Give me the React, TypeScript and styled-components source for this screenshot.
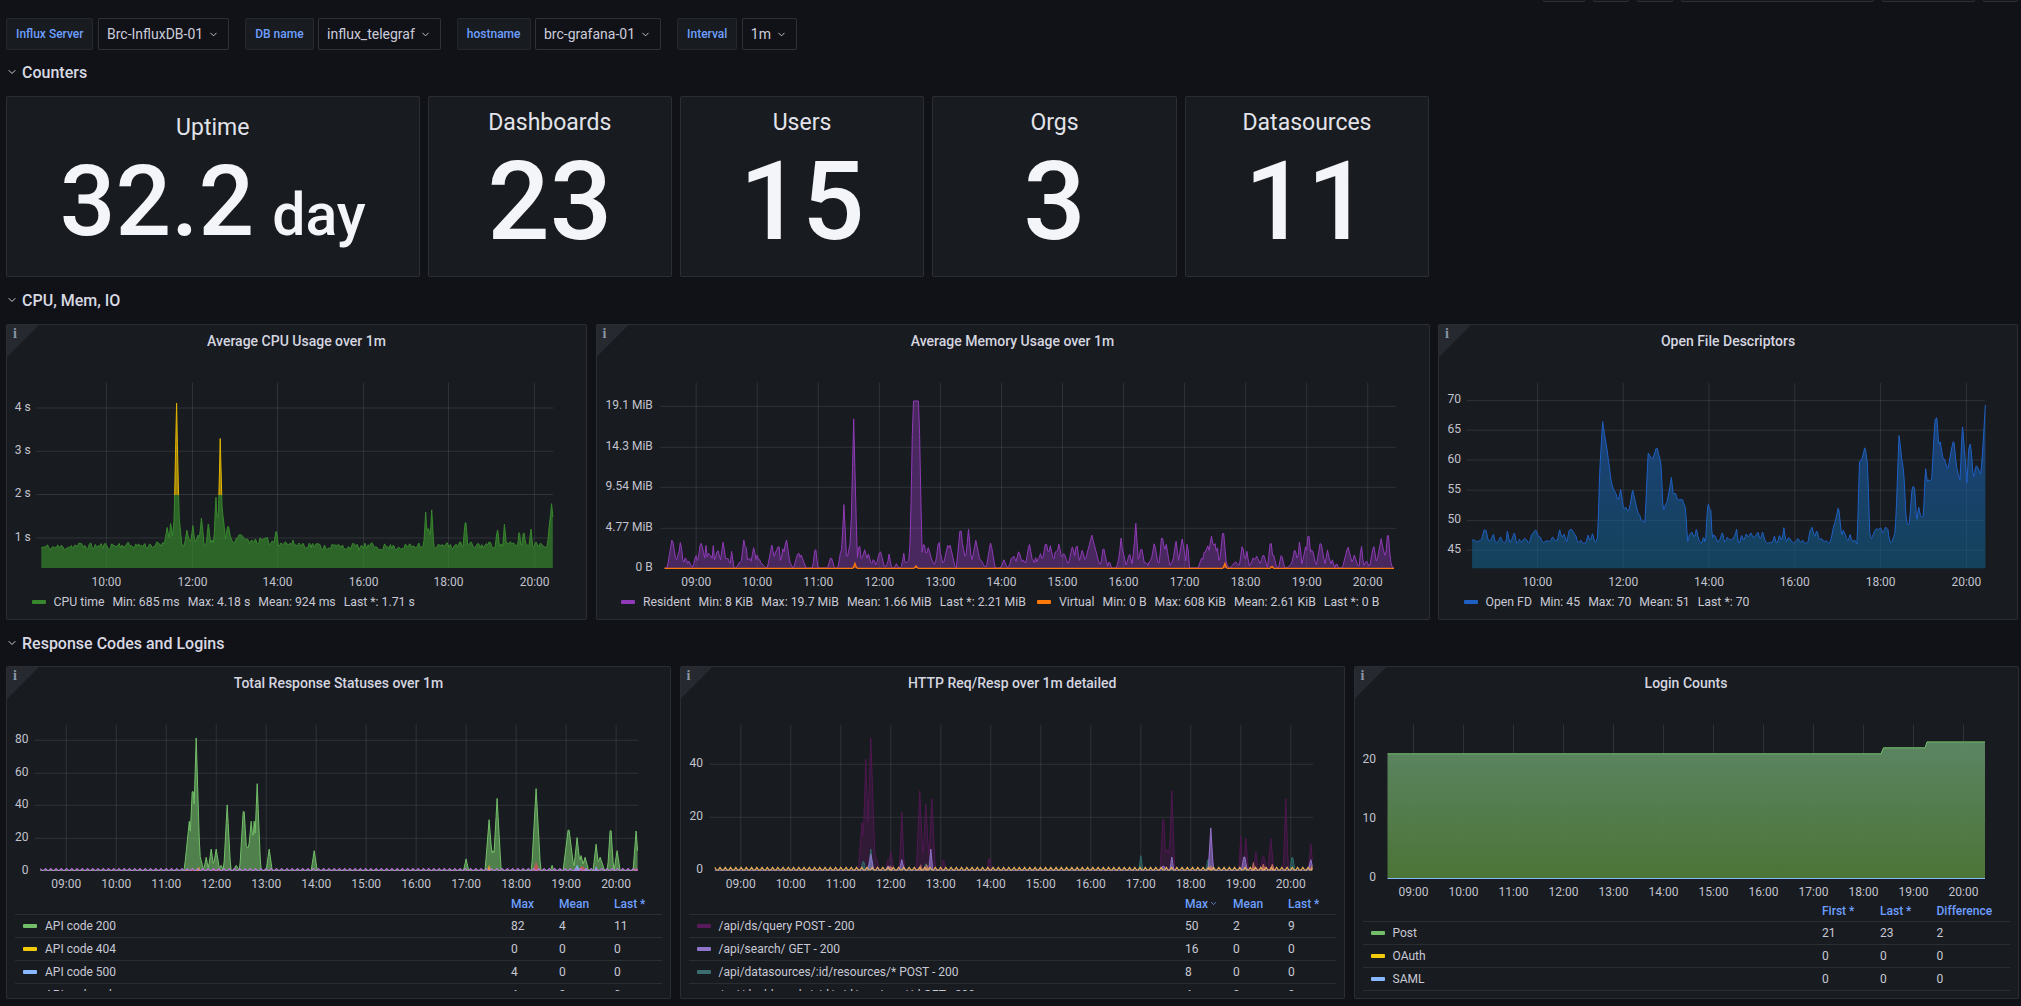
import React from "react";
import styled, { createGlobalStyle } from "styled-components";
import { ChevronDown } from "lucide-react";

type Pt = [number, number];
type Peak = [number, number, number];

const rng = (seed: number) => () => {
  seed |= 0;
  seed = (seed + 0x6d2b79f5) | 0;
  let t = Math.imul(seed ^ (seed >>> 15), 1 | seed);
  t = (t + Math.imul(t ^ (t >>> 7), 61 | t)) ^ t;
  return ((t ^ (t >>> 14)) >>> 0) / 4294967296;
};

const T0 = 8.48;
const T1 = 20.43;
const times = (step = 0.02) => {
  const out: number[] = [];
  for (let t = T0; t < T1; t += step) out.push(t);
  out.push(T1);
  return out;
};

const wiggle = (seed: number, knot: number) => {
  const r = rng(seed);
  const n = Math.ceil((T1 - T0) / knot) + 3;
  const k = Array.from({ length: n }, () => r());
  return (t: number) => {
    const p = (t - T0) / knot;
    const i = Math.floor(p);
    return k[i] + (k[i + 1] - k[i]) * (p - i);
  };
};

const interp = (pts: Pt[], t: number) => {
  if (t <= pts[0][0]) return pts[0][1];
  for (let i = 1; i < pts.length; i++) {
    if (t <= pts[i][0]) {
      const [a, b] = [pts[i - 1], pts[i]];
      return a[1] + ((b[1] - a[1]) * (t - a[0])) / (b[0] - a[0]);
    }
  }
  return pts[pts.length - 1][1];
};

const tri = (t: number, [c, h, w]: Peak) => Math.max(0, h * (1 - Math.abs(t - c) / w));
const maxPeaks = (t: number, list: Peak[]) => list.reduce((m, p) => Math.max(m, tri(t, p)), 0);

const toPx = (vals: Pt[], xAt9: number, pph: number, yZero: number, ppu: number): Pt[] =>
  vals.map(([t, v]) => [xAt9 + (t - 9) * pph, yZero - v * ppu]);

const line = (p: Pt[]) => "M" + p.map(([x, y]) => `${x.toFixed(1)} ${y.toFixed(1)}`).join("L");
const area = (p: Pt[], base: number) =>
  `${line(p)}L${p[p.length - 1][0].toFixed(1)} ${base}L${p[0][0].toFixed(1)} ${base}Z`;

/* CPU */
const cpuNoise = wiggle(11, 0.035);
const cpuNoise2 = wiggle(12, 0.3);
const cpuPeaks: Peak[] = [
  [11.42, 0.45, 0.07], [11.5, 0.55, 0.05], [11.64, 3.35, 0.07], [11.64, 1.15, 0.12], [11.88, 0.28, 0.05],
  [12.02, 0.4, 0.05], [12.13, 0.25, 0.06], [12.22, 0.5, 0.06], [12.38, 0.38, 0.05],
  [12.56, 1.0, 0.05], [12.66, 2.4, 0.06], [12.66, 1.15, 0.13], [12.85, 0.4, 0.08], [13.14, 0.22, 0.07],
  [13.97, 0.3, 0.05], [17.46, 0.85, 0.05], [17.6, 0.85, 0.05], [17.53, 0.45, 0.14], [18.39, 0.65, 0.05],
  [19.13, 0.42, 0.05], [19.3, 0.5, 0.04], [19.65, 0.3, 0.04], [19.75, 0.35, 0.04], [19.92, 0.38, 0.04], [20.4, 0.9, 0.09],
];
const cpuBase: Pt[] = [[8.5, 0.68], [10, 0.72], [11.2, 0.72], [11.9, 0.76], [13.3, 0.84], [14.2, 0.78], [15, 0.7], [17, 0.7], [20.4, 0.76]];
const cpuVals = times().map((t): Pt => [
  t,
  interp(cpuBase, t) + cpuNoise(t) * 0.18 + cpuNoise2(t) * 0.03 + maxPeaks(t, cpuPeaks),
]);
const cpuPx = cpuVals.map(([t, v]): Pt => [106.4 + (t - 10) * 42.8, 538 - (v - 1) * 43.1]);

/* Memory */
const memR = rng(99);
const memBumps: Peak[] = Array.from({ length: 200 }, () => [
  T0 + memR() * (T1 - T0),
  0.5 + Math.pow(memR(), 1.4) * 3.1,
  0.03 + memR() * 0.06,
]);
const memPeaks: Peak[] = [
  [11.42, 7.5, 0.05], [11.58, 17.6, 0.06], [13.33, 5.1, 0.07], [13.46, 4.6, 0.06], [15.48, 3.9, 0.14],
  [16.2, 5.3, 0.05], [16.63, 4.4, 0.05], [17.63, 4.9, 0.06], [17.44, 3.8, 0.09], [19.03, 4.7, 0.05],
  [20.33, 4.8, 0.05], [20.22, 3.5, 0.09], [12.52, 4.5, 0.05],
];
const memVals = times().map((t): Pt => {
  const plateau = t > 12.55 && t < 12.65 ? 19.7 : t > 12.5 && t <= 12.55 ? (t - 12.5) * 394 : t >= 12.65 && t < 12.7 ? (12.7 - t) * 394 : 0;
  return [t, Math.max(plateau, maxPeaks(t, memPeaks), maxPeaks(t, memBumps) + 0.05)];
});
const memPx = toPx(memVals, 695.7, 61.05, 568.3, 8.49);
const virtPeaks: Peak[] = [[11.6, 0.6, 0.03], [12.6, 0.3, 0.03], [17.66, 0.6, 0.03], [18.43, 0.3, 0.03]];
const virtPx = toPx(times().map((t): Pt => [t, maxPeaks(t, virtPeaks)]), 695.7, 61.05, 568.3, 8.49);

/* Open FD */
const fdX = (X: number) => 20 + (X - 1423) * 0.008786;
const fdKeys: Pt[] = ([
  [110, 47], [440, 47], [445, 48], [450, 58], [458, 66.5], [470, 62], [480, 57], [487, 55], [497, 53.5], [505, 54.5], [515, 52], [525, 50.5],
  [537, 55.5], [550, 52], [560, 49.5], [570, 49.3], [578, 61.5], [590, 60.5], [603, 62], [612, 60], [618, 52], [628, 53], [640, 57.5],
  [645, 54], [665, 53.5], [677, 52.5], [683, 47], [730, 47], [736, 52.5], [745, 52], [748, 47], [1060, 47], [1070, 48.7], [1083, 52.3],
  [1092, 47.5], [1125, 46], [1132, 45], [1138, 60], [1145, 60.5], [1153, 62.2], [1160, 58.5], [1165, 47.5], [1205, 48.5], [1225, 46.5], [1233, 46.5],
  [1243, 63.8], [1255, 58], [1262, 49.8], [1270, 49.5], [1278, 55], [1285, 55], [1290, 50], [1295, 51.5], [1308, 50.5], [1313, 59], [1318, 56],
  [1330, 56.8], [1338, 67.2], [1343, 67.2], [1348, 62.5], [1352, 63.5], [1360, 60], [1372, 58], [1382, 62], [1388, 63.5], [1395, 59], [1405, 57],
  [1411, 65.8], [1423, 55.8], [1428, 62], [1433, 62.3], [1440, 57], [1447, 59.5], [1460, 58], [1465, 62], [1472, 69.5],
] as Pt[]).map(([X, v]): Pt => [fdX(X), v]);
const fdNoise = wiggle(21, 0.055);
const fdVals = times().map((t): Pt => {
  const k = interp(fdKeys, t);
  const n = fdNoise(t);
  const amp = k < 49 ? 2.8 : 1.5;
  return [t, k + (n * n - 0.3) * amp];
});
const fdPx = fdVals.map(([t, v]): Pt => [1537.4 + (t - 10) * 42.95, 550.2 - (v - 45) * 6]);

/* Response statuses */
const respPeaks: Peak[] = [
  [11.46, 30, 0.1], [11.53, 55, 0.08], [11.6, 81, 0.08], [11.55, 24, 0.2], [11.8, 8, 0.05], [11.9, 13, 0.06], [12.0, 13, 0.07], [12.1, 3, 0.05],
  [12.22, 40, 0.07], [12.4, 3, 0.06], [12.55, 41, 0.08], [12.63, 15, 0.14], [12.7, 30, 0.09], [12.76, 30, 0.07], [12.82, 53, 0.07], [13.06, 13, 0.06],
  [13.96, 12, 0.06], [17, 7, 0.05], [17.46, 31, 0.08], [17.54, 12, 0.17], [17.62, 44, 0.08], [18.4, 50, 0.09], [18.72, 3, 0.03], [19.05, 27, 0.11],
  [19.22, 20, 0.07], [19.3, 9, 0.07], [19.38, 8, 0.07], [19.6, 16, 0.06], [19.68, 8, 0.09], [19.89, 29, 0.06], [20.02, 12, 0.06], [20.4, 24, 0.06],
];
const RX = 66.3;
const rToPx = (v: Pt[]) => toPx(v, RX, 49.98, 871, 1.635);
const resp200 = rToPx(times().map((t): Pt => [t, maxPeaks(t, respPeaks) + 0.4]));
const zig = (h: number, low: number) => times(0.035).map((t, i): Pt => [t, i % 3 === 0 ? h : low]);
const respZig = rToPx(zig(1.4, 0.3));
const respRed = rToPx(times().map((t): Pt => [t, maxPeaks(t, [[18.4, 6, 0.06], [19.32, 3, 0.1], [20.4, 2, 0.05], [12, 1, 0.1], [11.5, 1.5, 0.05]])]));
const respOrange = rToPx(times().map((t): Pt => [t, maxPeaks(t, [[11.65, 3, 0.04], [17.46, 4, 0.04], [11.4, 1, 0.04]])]));
const respBlue = rToPx(times().map((t): Pt => [t, maxPeaks(t, [[19.22, 4, 0.06], [19.6, 3, 0.04], [19.4, 2, 0.03]])]));

/* HTTP */
const HX = 740.3;
const hToPx = (v: Pt[]) => toPx(v, HX, 50, 870.3, 2.65);
const httpSeries = (list: Peak[]) => hToPx(times().map((t): Pt => [t, maxPeaks(t, list)]));
const httpMaroon = httpSeries([
  [11.42, 18, 0.07], [11.5, 42, 0.07], [11.6, 50, 0.09], [11.56, 14, 0.22], [11.95, 5, 0.05], [12.0, 7, 0.06], [12.22, 22, 0.05], [12.58, 30, 0.07],
  [12.7, 25, 0.07], [12.82, 27, 0.07], [12.7, 9, 0.2], [13.05, 5, 0.04], [13.97, 6, 0.04], [17.45, 23, 0.06], [17.62, 30, 0.06], [17.53, 8, 0.15],
  [18.4, 15, 0.06], [19.0, 13, 0.04], [19.1, 12, 0.05], [19.3, 7, 0.05], [19.45, 6, 0.07], [19.6, 12, 0.06], [19.9, 27, 0.05], [20.4, 10, 0.05],
]);
const httpLav = httpSeries([
  [11.6, 6, 0.06], [11.95, 2, 0.05], [12.22, 4, 0.05], [12.8, 8, 0.04], [17.45, 2, 0.05], [17.62, 5, 0.04], [18.4, 16, 0.05], [19.07, 6, 0.06], [20.4, 4, 0.05],
]);
const httpTeal = httpSeries([[11.45, 4, 0.05], [11.6, 8, 0.04], [17, 5.5, 0.04], [18.35, 5, 0.05], [20.03, 6, 0.05], [12.7, 2.5, 0.05]]);
const httpSalmon = httpSeries([[12, 2, 0.04], [12.6, 2.5, 0.04], [12.72, 2.5, 0.05], [19.25, 4, 0.04], [19.45, 3, 0.05], [19.63, 3, 0.05], [20.42, 2, 0.04], [18.4, 2, 0.06]]);
const httpZig = hToPx(zig(1.1, 0.1));

/* Login */
const LX = 1413;
const loginVals: Pt[] = [[T0, 21], [18.35, 21], [18.4, 22], [19.23, 22], [19.27, 23], [T1, 23]];
const loginPx = toPx(loginVals, LX, 50, 878.3, 5.93);
const loginZero = toPx([[T0, 0], [T1, 0]], LX, 50, 878.5, 5.93);

const hours = (first: number, x0: number, pph: number, step = 1, count = 12) =>
  Array.from({ length: count }, (_, i) => ({
    x: x0 + i * pph,
    label: `${String(first + i * step).padStart(2, "0")}:00`,
  }));

const GlobalStyle = createGlobalStyle`
  html, body {
    margin: 0;
    height: 1006px;
    overflow: hidden;
    background: #111217;
    color: #ccccdc;
    font-family: Roboto, "Liberation Sans", sans-serif;
    font-size: 12px;
  }
  * { box-sizing: border-box; }
`;

const Page = styled.div`
  width: 2021px;
  height: 1006px;
  padding: 0 0 0 6px;
  overflow: hidden;
`;

const TopEdge = styled.div`
  display: flex;
  justify-content: flex-end;
  align-items: flex-end;
  gap: 8px;
  height: 2px;
  padding-right: 3px;
  overflow: hidden;
`;

const EdgeButton = styled.div<{ $w: number }>`
  flex: none;
  width: ${(p) => p.$w}px;
  height: 32px;
  border: 1px solid rgba(204, 204, 220, 0.14);
  border-radius: 2px;
  background: #14161b;
`;

const VarBar = styled.div`
  display: flex;
  align-items: center;
  gap: 16px;
  height: 32px;
  margin-top: 16px;
`;

const VarGroup = styled.div`
  display: flex;
  gap: 4.5px;
`;

const VarLabel = styled.div`
  display: flex;
  align-items: center;
  height: 32px;
  padding: 0 9px;
  border: 1px solid rgba(204, 204, 220, 0.07);
  border-radius: 2px;
  background: #181b1f;
  color: #6e9fff;
  font-weight: 500;
  font-size: 12px;
`;

const VarSelect = styled.div`
  display: flex;
  align-items: center;
  gap: 5px;
  height: 32px;
  padding: 0 9px 0 8px;
  border: 1px solid rgba(204, 204, 220, 0.17);
  border-radius: 2px;
  background: #111217;
  color: #ccccdc;
  font-size: 14px;
`;

const RowTitle = styled.div<{ $top: number; $bottom: number }>`
  display: flex;
  align-items: center;
  gap: 4px;
  height: 24px;
  margin: ${(p) => p.$top}px 0 ${(p) => p.$bottom}px 0;
  color: #d8d9e3;
  font-size: 16px;
  font-weight: 500;
`;

const ChevronSlot = styled.span`
  display: flex;
  width: 12px;
  justify-content: center;
  color: #ccccdc;
`;

const Grid = styled.div<{ $cols: string; $gap: number; $h: number }>`
  display: grid;
  grid-template-columns: ${(p) => p.$cols};
  column-gap: ${(p) => p.$gap}px;
  height: ${(p) => p.$h}px;
`;

const Panel = styled.section`
  position: relative;
  display: flex;
  flex-direction: column;
  min-width: 0;
  overflow: hidden;
  border: 1px solid rgba(204, 204, 220, 0.1);
  border-radius: 2px;
  background: #181b1f;
`;

const StatBody = styled.div<{ $pad: number; $gap: number }>`
  display: flex;
  flex-direction: column;
  align-items: center;
  padding-top: ${(p) => p.$pad}px;
  gap: ${(p) => p.$gap}px;
`;

const StatTitle = styled.div`
  height: 28px;
  line-height: 28px;
  font-size: 23px;
  color: #e2e3ea;
`;

const StatValue = styled.div<{ $size: number }>`
  font-size: ${(p) => p.$size}px;
  line-height: 1;
  font-weight: 500;
  color: #f4f5f8;
  white-space: nowrap;
`;

const StatUnit = styled.span`
  font-size: 59px;
  margin-left: 18px;
`;

const Corner = styled.div`
  position: absolute;
  top: 0;
  left: 0;
  width: 32px;
  height: 32px;
  background: #262a30;
  clip-path: polygon(0 0, 100% 0, 0 100%);
`;

const CornerMark = styled.span`
  position: absolute;
  top: 1px;
  left: 6px;
  color: #8b95a5;
  font-family: "Liberation Serif", serif;
  font-weight: 700;
  font-size: 14px;
  line-height: 16px;
`;

const PanelTitle = styled.h2`
  flex: none;
  height: 32px;
  margin: 0;
  line-height: 32px;
  text-align: center;
  color: #d5d6e0;
  font-size: 14px;
  font-weight: 500;
`;

const ChartSvg = styled.svg`
  display: block;
  flex: none;
`;

const LegendLine = styled.div`
  display: flex;
  align-items: center;
  gap: 11px;
  height: 24px;
  padding-left: 24.5px;
  font-size: 12.25px;
  color: #c8c9d6;
  white-space: nowrap;
`;

const LegendItem = styled.div`
  display: flex;
  align-items: center;
  gap: 8px;
`;

const Swatch = styled.i<{ $c: string }>`
  flex: none;
  width: 14px;
  height: 4px;
  border-radius: 1px;
  background: ${(p) => p.$c};
`;

const LegendTable = styled.div<{ $h: number }>`
  flex: none;
  height: ${(p) => p.$h}px;
  margin: 0 8px;
  overflow: hidden;
`;

const HeadRow = styled.div<{ $cols: string }>`
  display: grid;
  grid-template-columns: ${(p) => p.$cols};
  align-items: center;
  height: 19px;
  padding-bottom: 3px;
  border-bottom: 1px solid rgba(204, 204, 220, 0.1);
  color: #6e9fff;
  font-weight: 500;
`;

const HeadCell = styled.span`
  display: flex;
  align-items: center;
  gap: 1px;
`;

const BodyRow = styled.div<{ $cols: string }>`
  display: grid;
  grid-template-columns: ${(p) => p.$cols};
  align-items: center;
  height: 23px;
  border-bottom: 1px solid rgba(204, 204, 220, 0.1);
  color: #c8c9d6;
`;

const RowName = styled.span`
  display: flex;
  align-items: center;
  gap: 8px;
  padding-left: 8px;
  white-space: nowrap;
`;

type Series = { d: string; fill?: string; stroke?: string; opacity?: number; width?: number };
type ChartProps = {
  x: number;
  y: number;
  w: number;
  h: number;
  top: number;
  base: number;
  left: number;
  right: number;
  labelEnd: number;
  tickY: number;
  yTicks: { y: number; label: string; dy?: number }[];
  xTicks: { x: number; label: string }[];
  series: Series[];
  defs?: React.ReactNode;
};

const Chart = ({ x, y, w, h, top, base, left, right, labelEnd, tickY, yTicks, xTicks, series, defs }: ChartProps) => (
  <ChartSvg width={w} height={h} viewBox={`${x} ${y} ${w} ${h}`}>
    {defs && <defs>{defs}</defs>}
    {yTicks.map((t) =>
      t.y < base - 1 ? <line key={t.label} x1={left} x2={right} y1={t.y} y2={t.y} stroke="rgba(240,250,255,.11)" /> : null
    )}
    {xTicks.map((t) => (
      <line key={t.label} x1={t.x} x2={t.x} y1={top} y2={base} stroke="rgba(240,250,255,.11)" />
    ))}
    {series.map((s, i) => (
      <path
        key={i}
        d={s.d}
        fill={s.fill ?? "none"}
        fillOpacity={s.opacity}
        stroke={s.stroke ?? "none"}
        strokeWidth={s.width ?? 1}
      />
    ))}
    {yTicks.map((t) => (
      <text
        key={t.label}
        x={labelEnd}
        y={t.y - (t.dy ?? 1.5)}
        textAnchor="end"
        dominantBaseline="central"
        fontFamily="Roboto, sans-serif"
        fontSize="12"
        fill="#c2c3cf"
      >
        {t.label}
      </text>
    ))}
    {xTicks.map((t) => (
      <text
        key={t.label}
        x={t.x}
        y={tickY}
        textAnchor="middle"
        dominantBaseline="central"
        fontFamily="Roboto, sans-serif"
        fontSize="12"
        fill="#c2c3cf"
      >
        {t.label}
      </text>
    ))}
  </ChartSvg>
);

const InfoCorner = () => (
  <>
    <Corner />
    <CornerMark>i</CornerMark>
  </>
);

const Variable = ({ label, value }: { label: string; value: string }) => (
  <VarGroup>
    <VarLabel>{label}</VarLabel>
    <VarSelect>
      {value}
      <ChevronDown size={11} strokeWidth={2} />
    </VarSelect>
  </VarGroup>
);

const Section = ({ title, top, bottom }: { title: string; top: number; bottom: number }) => (
  <RowTitle $top={top} $bottom={bottom}>
    <ChevronSlot>
      <ChevronDown size={12} strokeWidth={2} />
    </ChevronSlot>
    {title}
  </RowTitle>
);

const Stat = ({ title, value }: { title: string; value: string }) => (
  <Panel>
    <StatBody $pad={12} $gap={10}>
      <StatTitle>{title}</StatTitle>
      <StatValue $size={110}>{value}</StatValue>
    </StatBody>
  </Panel>
);

type LegendRow = { color: string; name: string; values: string[] };
const TableLegend = ({
  cols,
  heads,
  rows,
  h,
  sorted,
}: {
  cols: string;
  heads: string[];
  rows: LegendRow[];
  h: number;
  sorted?: boolean;
}) => (
  <LegendTable $h={h}>
    <HeadRow $cols={cols}>
      <span />
      {heads.map((c, i) => (
        <HeadCell key={c}>
          {c}
          {sorted && i === 0 && <ChevronDown size={9} strokeWidth={2} />}
        </HeadCell>
      ))}
    </HeadRow>
    {rows.map((r) => (
      <BodyRow key={r.name} $cols={cols}>
        <RowName>
          <Swatch $c={r.color} />
          {r.name}
        </RowName>
        {r.values.map((v, i) => (
          <span key={i}>{v}</span>
        ))}
      </BodyRow>
    ))}
  </LegendTable>
);

const CPU_COLS = "1fr 48px 55px 48px";
const LOGIN_COLS = "1fr 58px 56.5px 73px";

export default function App() {
  return (
    <>
      <GlobalStyle />
      <Page>
        <TopEdge>
          <EdgeButton $w={42} />
          <EdgeButton $w={36} />
          <EdgeButton $w={36} />
          <EdgeButton $w={193} />
          <EdgeButton $w={93} />
          <EdgeButton $w={35} />
        </TopEdge>
        <VarBar>
          <Variable label="Influx Server" value="Brc-InfluxDB-01" />
          <Variable label="DB name" value="influx_telegraf" />
          <Variable label="hostname" value="brc-grafana-01" />
          <Variable label="Interval" value="1m" />
        </VarBar>

        <Section title="Counters" top={10} bottom={12} />
        <Grid $cols="413.5px 244.5px 244px 245px 244px" $gap={8} $h={181}>
          <Panel>
            <StatBody $pad={17} $gap={11}>
              <StatTitle>Uptime</StatTitle>
              <StatValue $size={98}>
                32.2<StatUnit>day</StatUnit>
              </StatValue>
            </StatBody>
          </Panel>
          <Stat title="Dashboards" value="23" />
          <Stat title="Users" value="15" />
          <Stat title="Orgs" value="3" />
          <Stat title="Datasources" value="11" />
        </Grid>

        <Section title="CPU, Mem, IO" top={11} bottom={12} />
        <Grid $cols="581px 834px 580px" $gap={8.5} $h={296}>
          <Panel>
            <InfoCorner />
            <PanelTitle>Average CPU Usage over 1m</PanelTitle>
            <Chart
              x={7}
              y={357}
              w={579}
              h={233}
              top={382.7}
              base={568}
              left={36}
              right={553.4}
              labelEnd={30.6}
              tickY={581.7}
              yTicks={[
                { y: 408, label: "4 s" },
                { y: 451.3, label: "3 s" },
                { y: 494.5, label: "2 s" },
                { y: 538, label: "1 s" },
              ]}
              xTicks={hours(10, 106.4, 85.6, 2, 6).map((t, i) => ({
                ...t,
                x: [106.4, 192.5, 277.5, 363.6, 448.5, 534.6][i],
              }))}
              defs={
                <linearGradient id="cpuThreshold" gradientUnits="userSpaceOnUse" x1="0" x2="0" y1="380" y2="570">
                  <stop offset={(494.7 - 380) / 190} stopColor="#E0B400" />
                  <stop offset={(494.7 - 380) / 190} stopColor="#37872D" />
                </linearGradient>
              }
              series={[
                { d: area(cpuPx, 568), fill: "url(#cpuThreshold)", opacity: 0.68 },
                { d: line(cpuPx), stroke: "url(#cpuThreshold)" },
              ]}
            />
            <LegendLine>
              <LegendItem>
                <Swatch $c="#37872D" />
                <span>CPU time</span>
                <span>Min: 685 ms</span>
                <span>Max: 4.18 s</span>
                <span>Mean: 924 ms</span>
                <span>Last *: 1.71 s</span>
              </LegendItem>
            </LegendLine>
          </Panel>

          <Panel>
            <InfoCorner />
            <PanelTitle>Average Memory Usage over 1m</PanelTitle>
            <Chart
              x={596.5}
              y={357}
              w={832}
              h={233}
              top={382.7}
              base={568.3}
              left={660}
              right={1395.4}
              labelEnd={652.3}
              tickY={581.7}
              yTicks={[
                { y: 406.3, label: "19.1 MiB" },
                { y: 447.3, label: "14.3 MiB" },
                { y: 487.3, label: "9.54 MiB" },
                { y: 528.3, label: "4.77 MiB" },
                { y: 568.3, label: "0 B" },
              ]}
              xTicks={hours(9, 695.7, 61.05)}
              series={[
                { d: area(memPx, 568.3), fill: "#8F3BB8", opacity: 0.42 },
                { d: line(memPx), stroke: "#8F3BB8" },
                { d: area(virtPx, 568.3), fill: "#FF780A", opacity: 0.5 },
                { d: line(virtPx), stroke: "#FF780A", width: 1.2 },
              ]}
            />
            <LegendLine>
              <LegendItem>
                <Swatch $c="#8F3BB8" />
                <span>Resident</span>
                <span>Min: 8 KiB</span>
                <span>Max: 19.7 MiB</span>
                <span>Mean: 1.66 MiB</span>
                <span>Last *: 2.21 MiB</span>
              </LegendItem>
              <LegendItem>
                <Swatch $c="#FF780A" />
                <span>Virtual</span>
                <span>Min: 0 B</span>
                <span>Max: 608 KiB</span>
                <span>Mean: 2.61 KiB</span>
                <span>Last *: 0 B</span>
              </LegendItem>
            </LegendLine>
          </Panel>

          <Panel>
            <InfoCorner />
            <PanelTitle>Open File Descriptors</PanelTitle>
            <Chart
              x={1439}
              y={357}
              w={578}
              h={233}
              top={382.9}
              base={568.2}
              left={1466.6}
              right={1984.8}
              labelEnd={1461}
              tickY={581.6}
              yTicks={[
                { y: 400.4, label: "70" },
                { y: 430.2, label: "65" },
                { y: 460, label: "60" },
                { y: 490.2, label: "55" },
                { y: 520.4, label: "50" },
                { y: 550.2, label: "45" },
              ]}
              xTicks={hours(10, 1537.4, 85.8, 2, 6)}
              defs={
                <linearGradient id="fdFill" gradientUnits="userSpaceOnUse" x1="0" x2="0" y1="400" y2="568">
                  <stop offset="0" stopColor="#1F60C4" stopOpacity="0.55" />
                  <stop offset="1" stopColor="#125a80" stopOpacity="0.62" />
                </linearGradient>
              }
              series={[
                { d: area(fdPx, 568.2), fill: "url(#fdFill)" },
                { d: line(fdPx), stroke: "#1F60C4" },
              ]}
            />
            <LegendLine>
              <LegendItem>
                <Swatch $c="#1F60C4" />
                <span>Open FD</span>
                <span>Min: 45</span>
                <span>Max: 70</span>
                <span>Mean: 51</span>
                <span>Last *: 70</span>
              </LegendItem>
            </LegendLine>
          </Panel>
        </Grid>

        <Section title="Response Codes and Logins" top={11} bottom={11} />
        <Grid $cols="665px 665.5px 665px" $gap={8.5} $h={333}>
          <Panel>
            <InfoCorner />
            <PanelTitle>Total Response Statuses over 1m</PanelTitle>
            <Chart
              x={7}
              y={699}
              w={663}
              h={197}
              top={724.7}
              base={871}
              left={34.7}
              right={638.3}
              labelEnd={28.6}
              tickY={884.3}
              yTicks={[
                { y: 740.3, label: "80" },
                { y: 773.3, label: "60" },
                { y: 805.3, label: "40" },
                { y: 838.3, label: "20" },
                { y: 871, label: "0" },
              ]}
              xTicks={hours(9, 66.3, 49.98)}
              series={[
                { d: area(resp200, 871), fill: "#73BF69", opacity: 0.62 },
                { d: line(resp200), stroke: "#73BF69" },
                { d: area(respRed, 871), fill: "#F2495C", opacity: 0.7 },
                { d: area(respOrange, 871), fill: "#FF9830", opacity: 0.8 },
                { d: area(respBlue, 871), fill: "#8AB8FF", opacity: 0.8 },
                { d: line(respZig), stroke: "#B877D9", width: 1.2 },
              ]}
            />
            <TableLegend
              cols={CPU_COLS}
              heads={["Max", "Mean", "Last *"]}
              h={95}
              rows={[
                { color: "#73BF69", name: "API code 200", values: ["82", "4", "11"] },
                { color: "#F2CC0C", name: "API code 404", values: ["0", "0", "0"] },
                { color: "#8AB8FF", name: "API code 500", values: ["4", "0", "0"] },
                { color: "#FF780A", name: "API code unknown", values: ["4", "0", "0"] },
              ]}
            />
          </Panel>

          <Panel>
            <InfoCorner />
            <PanelTitle>HTTP Req/Resp over 1m detailed</PanelTitle>
            <Chart
              x={680.5}
              y={699}
              w={663.5}
              h={197}
              top={724.7}
              base={870.3}
              left={709}
              right={1312.7}
              labelEnd={702.5}
              tickY={884.3}
              yTicks={[
                { y: 764.3, label: "40" },
                { y: 817.3, label: "20" },
                { y: 870.3, label: "0" },
              ]}
              xTicks={hours(9, 740.3, 50)}
              series={[
                { d: area(httpMaroon, 870.3), fill: "#5A1A5C", opacity: 0.38 },
                { d: line(httpMaroon), stroke: "#4f1750" },
                { d: area(httpTeal, 870.3), fill: "#2F6B6B", opacity: 0.6 },
                { d: line(httpTeal), stroke: "#2F6B6B" },
                { d: area(httpLav, 870.3), fill: "#8F75C9", opacity: 0.6 },
                { d: line(httpLav), stroke: "#8F75C9" },
                { d: area(httpSalmon, 870.3), fill: "#E8836B", opacity: 0.7 },
                { d: line(httpZig), stroke: "#E8B05A", width: 1.2 },
              ]}
            />
            <TableLegend
              cols={CPU_COLS}
              heads={["Max", "Mean", "Last *"]}
              h={95}
              sorted
              rows={[
                { color: "#5A1A5C", name: "/api/ds/query POST - 200", values: ["50", "2", "9"] },
                { color: "#8F75C9", name: "/api/search/ GET - 200", values: ["16", "0", "0"] },
                { color: "#3B6E70", name: "/api/datasources/:id/resources/* POST - 200", values: ["8", "0", "0"] },
                { color: "#E8836B", name: "/api/dashboards/uid/:uid/versions/:id GET - 200", values: ["4", "0", "0"] },
              ]}
            />
          </Panel>

          <Panel>
            <InfoCorner />
            <PanelTitle>Login Counts</PanelTitle>
            <Chart
              x={1354.5}
              y={699}
              w={663}
              h={204}
              top={724.7}
              base={878.3}
              left={1386.5}
              right={1985.5}
              labelEnd={1375.6}
              tickY={891.7}
              yTicks={[
                { y: 760, label: "20" },
                { y: 819.3, label: "10" },
                { y: 878.3, label: "0" },
              ]}
              xTicks={hours(9, 1413, 50)}
              defs={
                <linearGradient id="loginFill" gradientUnits="userSpaceOnUse" x1="0" x2="0" y1="745" y2="878">
                  <stop offset="0" stopColor="#5f8b66" stopOpacity="0.94" />
                  <stop offset="1" stopColor="#4f7a39" stopOpacity="0.94" />
                </linearGradient>
              }
              series={[
                { d: area(loginPx, 878.3), fill: "url(#loginFill)" },
                { d: line(loginPx), stroke: "#73BF69" },
                { d: line(loginZero), stroke: "#8AB8FF" },
              ]}
            />
            <TableLegend
              cols={LOGIN_COLS}
              heads={["First *", "Last *", "Difference"]}
              h={88}
              rows={[
                { color: "#73BF69", name: "Post", values: ["21", "23", "2"] },
                { color: "#F2CC0C", name: "OAuth", values: ["0", "0", "0"] },
                { color: "#8AB8FF", name: "SAML", values: ["0", "0", "0"] },
              ]}
            />
          </Panel>
        </Grid>
      </Page>
    </>
  );
}
